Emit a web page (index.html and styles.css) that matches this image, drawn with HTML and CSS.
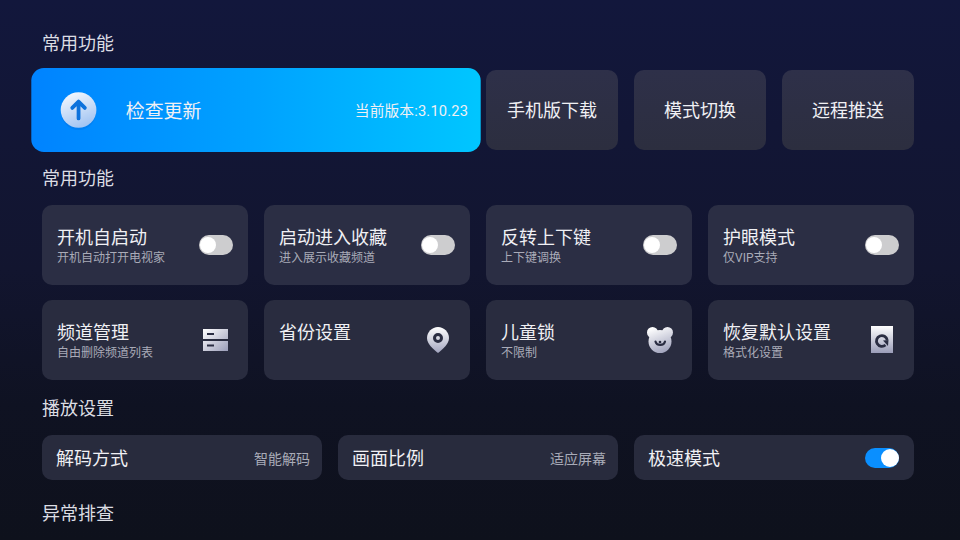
FILE: index.html
```html
<!DOCTYPE html>
<html lang="zh-CN">
<head>
    <meta charset="UTF-8">
    <title>设置</title>
    <link rel="stylesheet" href="styles.css">
</head>
<body>
    <div class="page">
        <h2 class="heading">常用功能</h2>
        <div class="row row-top">
            <div class="card card-update">
                <svg class="update-icon" viewBox="0 0 36 40" width="36" height="40">
                    <defs>
                        <linearGradient id="upd" x1="0.2" y1="0" x2="0.6" y2="1">
                            <stop offset="0" stop-color="#f6f9fe"/>
                            <stop offset="1" stop-color="#a0c3f2"/>
                        </linearGradient>
                    </defs>
                    <circle cx="18" cy="20.500" r="16.500" fill="#0062d0" opacity="0.25"/>
                    <circle cx="18" cy="18" r="17" fill="url(#upd)"/>
                    <path d="M12 16 L18 10 L24 16 M18 10.500 V26" fill="none" stroke="#0d72dc" stroke-width="3.600" stroke-linecap="round" stroke-linejoin="round"/>
                </svg>
                <span class="update-name">检查更新</span>
                <span class="update-version">当前版本:3.10.23</span>
            </div>
            <div class="card card-center">手机版下载</div>
            <div class="card card-center">模式切换</div>
            <div class="card card-center">远程推送</div>
        </div>

        <h2 class="heading">常用功能</h2>
        <div class="row row-four">
            <div class="card card-item">
                <div class="item-text"><div class="item-name">开机自启动</div><div class="item-sub">开机自动打开电视家</div></div>
                <span class="toggle"></span>
            </div>
            <div class="card card-item">
                <div class="item-text"><div class="item-name">启动进入收藏</div><div class="item-sub">进入展示收藏频道</div></div>
                <span class="toggle"></span>
            </div>
            <div class="card card-item">
                <div class="item-text"><div class="item-name">反转上下键</div><div class="item-sub">上下键调换</div></div>
                <span class="toggle"></span>
            </div>
            <div class="card card-item">
                <div class="item-text"><div class="item-name">护眼模式</div><div class="item-sub">仅VIP支持</div></div>
                <span class="toggle"></span>
            </div>
            <div class="card card-item">
                <div class="item-text"><div class="item-name">频道管理</div><div class="item-sub">自由删除频道列表</div></div>
                <svg class="item-icon" viewBox="0 0 30 30" width="30" height="30">
                    <defs>
                        <linearGradient id="ico1" x1="0" y1="0" x2="1" y2="1">
                            <stop offset="0" stop-color="#ffffff"/>
                            <stop offset="1" stop-color="#9a9db8"/>
                        </linearGradient>
                    </defs>
                    <path d="M2 4 H27 V14 H2 Z M2 16 H27 V26 H2 Z" fill="url(#ico1)"/>
                    <path d="M6 8 H13 V10 H6 Z M6 19.500 H13 V21.500 H6 Z" fill="#2a2d42"/>
                </svg>
            </div>
            <div class="card card-item card-top">
                <div class="item-text"><div class="item-name">省份设置</div></div>
                <svg class="item-icon" viewBox="0 0 30 30" width="30" height="30">
                    <defs>
                        <linearGradient id="ico2" x1="0" y1="0" x2="0" y2="1">
                            <stop offset="0" stop-color="#ffffff"/>
                            <stop offset="1" stop-color="#a2a5bf"/>
                        </linearGradient>
                    </defs>
                    <path d="M15 2 C21 2 26 7 26 13 C26 19 20 24 15 28 C10 24 4 19 4 13 C4 7 9 2 15 2 Z" fill="url(#ico2)"/>
                    <circle cx="15" cy="13" r="3.500" fill="none" stroke="#2a2d42" stroke-width="3"/>
                </svg>
            </div>
            <div class="card card-item">
                <div class="item-text"><div class="item-name">儿童锁</div><div class="item-sub">不限制</div></div>
                <svg class="item-icon" viewBox="0 0 30 30" width="30" height="30">
                    <defs>
                        <linearGradient id="ico3" gradientUnits="userSpaceOnUse" x1="10" y1="2" x2="20" y2="28">
                            <stop offset="0" stop-color="#ffffff"/>
                            <stop offset="1" stop-color="#9ea1bb"/>
                        </linearGradient>
                    </defs>
                    <g fill="url(#ico3)">
                        <circle cx="7.500" cy="7.500" r="5.500"/>
                        <circle cx="22.500" cy="7.500" r="5.500"/>
                        <ellipse cx="15" cy="16.500" rx="11.500" ry="11.500"/>
                    </g>
                    <path d="M10.500 16.500 C11.500 21 19 21 20 16.500" fill="none" stroke="#2a2d42" stroke-width="2.200" stroke-linecap="round"/>
                    <circle cx="15" cy="17" r="1.300" fill="#2a2d42"/>
                </svg>
            </div>
            <div class="card card-item">
                <div class="item-text"><div class="item-name">恢复默认设置</div><div class="item-sub">格式化设置</div></div>
                <svg class="item-icon" viewBox="0 0 30 30" width="30" height="30">
                    <defs>
                        <linearGradient id="ico4" x1="0" y1="0" x2="0" y2="1">
                            <stop offset="0" stop-color="#ffffff"/>
                            <stop offset="1" stop-color="#9a9db8"/>
                        </linearGradient>
                    </defs>
                    <rect x="4" y="1" width="22" height="27" fill="url(#ico4)"/>
                    <path d="M18.500 20 A5.400 5.400 0 1 1 20.200 15" fill="none" stroke="#2a2d42" stroke-width="2.800"/>
                    <path d="M16 15.500 L21.500 15 L21 21 Z" fill="#2a2d42"/>
                </svg>
            </div>
        </div>

        <h2 class="heading">播放设置</h2>
        <div class="row row-three">
            <div class="card card-line"><span class="line-name">解码方式</span><span class="line-value">智能解码</span></div>
            <div class="card card-line"><span class="line-name">画面比例</span><span class="line-value">适应屏幕</span></div>
            <div class="card card-line card-speed"><span class="line-name">极速模式</span><span class="toggle toggle-on"></span></div>
        </div>

        <h2 class="heading heading-last">异常排查</h2>
    </div>
</body>
</html>
```

FILE: styles.css
```css
html, body {
    margin: 0;
    height: 100%;
    overflow: hidden;
}
body {
    font-family: Roboto, "Noto Sans CJK SC", sans-serif;
    color: #f0f0f4;
    background: linear-gradient(180deg, #12173c 0%, #12152f 50%, #0f1222 75%, #0e111c 100%);
}
.page {
    padding: 32px 46px 0 42px;
}
.heading {
    margin: 17px 0 14px;
    font-size: 18px;
    line-height: 24px;
    font-weight: 400;
    color: #dcdde3;
}
.heading:first-child {
    margin-top: 0;
}
.heading-last {
    margin-top: 22px;
}
.row {
    display: grid;
    gap: 15px 16px;
}
.row-top {
    grid-template-columns: 428px repeat(3, 132px);
}
.row-four {
    grid-template-columns: repeat(4, 206px);
    grid-auto-rows: 80px;
}
.row-three {
    grid-template-columns: repeat(3, 280px);
}
.card {
    box-sizing: border-box;
    border-radius: 10px;
    background: #282b3d;
}
.card-update {
    display: flex;
    align-items: center;
    height: 80px;
    padding: 0 12px 0 28px;
    background: linear-gradient(90deg, #0083ff 0%, #00a2ff 50%, #00c6ff 100%);
    transform: scale(1.05);
    border-radius: 12px;
}
.update-icon {
    margin: 3px 1px 0 -1px;
}
.update-name {
    margin-left: 26px;
    font-size: 18px;
}
.update-version {
    margin-left: auto;
    font-size: 14px;
    letter-spacing: 0.15px;
}
.card-center {
    display: flex;
    align-items: center;
    justify-content: center;
    padding-bottom: 2px;
    font-size: 18px;
    background: linear-gradient(180deg, #2e3049 0%, #2c2e3f 100%);
}
.card-item {
    display: flex;
    align-items: center;
    justify-content: space-between;
    padding: 1px 15px 0;
    background: #2b2e44;
}
.card-item:nth-child(n+5) {
    background: #292c3f;
}
.card-item .toggle {
    margin-top: -1px;
}
.card-top {
    align-items: flex-start;
    padding-top: 21px;
}
.item-name {
    font-size: 18px;
    line-height: 24px;
}
.item-sub {
    font-size: 12px;
    line-height: 16px;
    color: #a9abb8;
}
.item-icon {
    flex: none;
    align-self: center;
    margin: -1px 2px 0 0;
}
.card-top .item-icon {
    margin-top: -21px;
}
.card-line {
    display: flex;
    align-items: center;
    justify-content: space-between;
    height: 45px;
    padding: 0 12px 0 14px;
}
.card-speed {
    padding-right: 15px;
}
.line-name {
    margin-bottom: 2px;
    font-size: 18px;
}
.line-value {
    font-size: 14px;
    color: #a9abb8;
}
.toggle {
    position: relative;
    flex: none;
    width: 34px;
    height: 20px;
    border-radius: 10px;
    background: #cdcdcf;
}
.toggle::after {
    content: "";
    position: absolute;
    left: 1px;
    top: 2px;
    width: 16px;
    height: 16px;
    border-radius: 50%;
    background: #fff;
}
.toggle-on {
    background: #0a8fff;
}
.toggle-on::after {
    left: auto;
    right: 0;
    top: 1px;
    width: 18px;
    height: 18px;
}
```
